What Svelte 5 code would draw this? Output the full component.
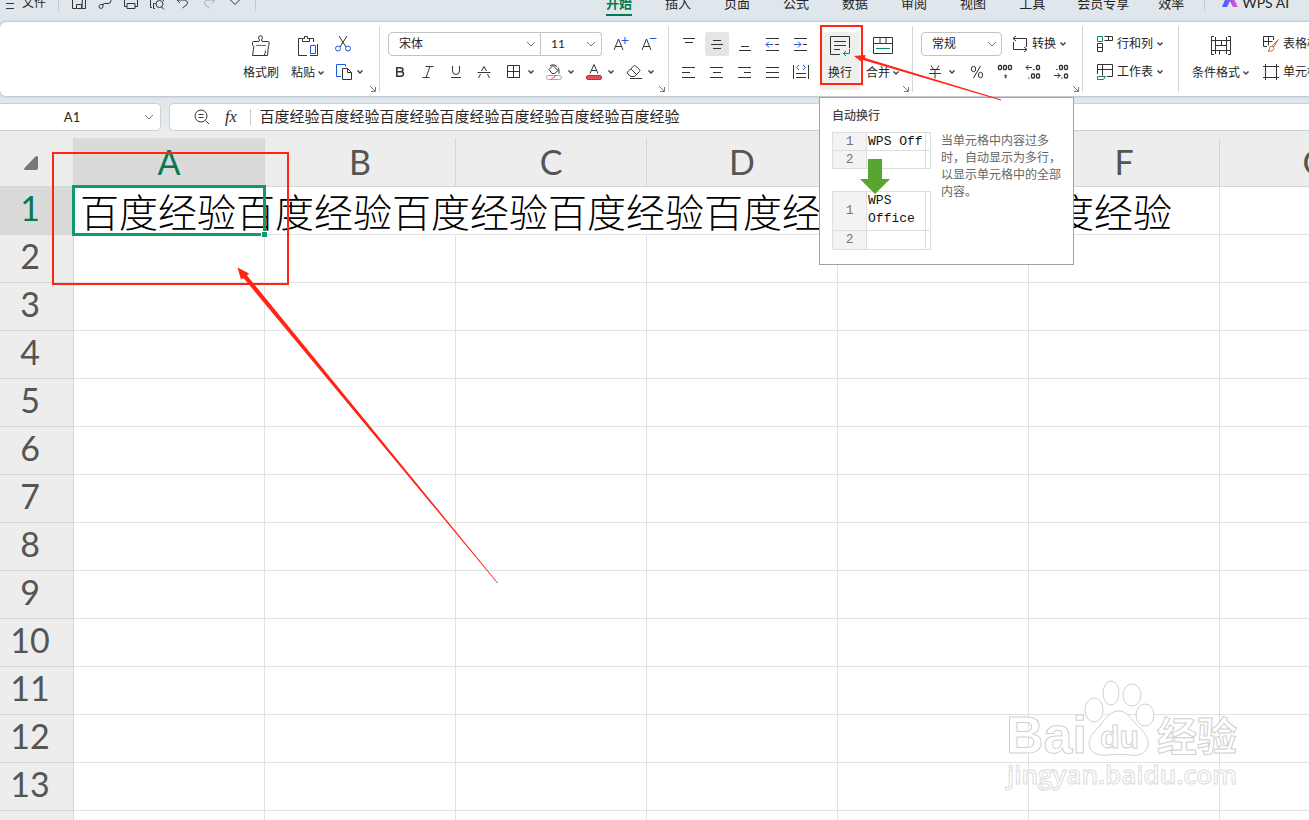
<script lang="ts">
    const mainTabs = ['开始', '插入', '页面', '公式', '数据', '审阅', '视图', '工具'];
    const extraTabs = ['会员专享', '效率'];
    const columns = ['A', 'B', 'C', 'D', 'E', 'F', 'G'];
    const rows = Array.from({ length: 14 }, (_, i) => i + 1);
    const content = '百度经验'.repeat(7);

    // quick access toolbar, 16x16 outlines
    const quick = [
        { name: '保存', d: 'M1.500 1v12.500H5M11 13.500h3.500V4L11.500 1zM5.500 13.500v-4h5v4z' },
        { name: '输出', d: 'M6 9.500H3.500a2 2 0 1 0 2.500 2V10q0-1.500 1.500-1.500H11a3 3 0 0 0 0-6H8M8 8.500h3' },
        { name: '打印', d: 'M4 11.500H1.500V4.500h13v7H12M4 8.500h8v5H4zM4 4V1h8v3' },
        { name: '打印预览', d: 'M3 12.500H1.500V4.500h13V6M6 13.500H4.500V8.500h2M15 14.500l-2.500-2.500M10.500 5.500a3.500 3.500 0 1 1 0 7 3.500 3.500 0 0 1 0-7' },
        { name: '撤销', d: 'M5 2L2 5l3 3M2 5h8a3 3 0 0 1 2 4.500L7.500 13' },
        { name: '恢复', d: 'M11 2l3 3-3 3M14 5H6a3 3 0 0 0-2 4.500L8.500 13' },
        { name: '更多', d: 'M3.500 5L8 9.500 12.500 5' }
    ];

    const alignTop = [
        { name: '顶端对齐', d: 'M2 2.500h12M4 6.500h8' },
        { name: '垂直居中', d: 'M4 4.500h8M2 8.500h12M4 12.500h8' },
        { name: '底端对齐', d: 'M4 10.500h8M2 14.500h12' }
    ];
    const alignBottom = [
        { name: '左对齐', d: 'M1 3.500h13M1 8.500h8M1 13.500h13' },
        { name: '水平居中', d: 'M1 3.500h13M4 8.500h8M1 13.500h13' },
        { name: '右对齐', d: 'M1 3.500h13M7 8.500h7M1 13.500h13' },
        { name: '两端对齐', d: 'M1 3.500h13M1 8.500h13M1 13.500h13' }
    ];

    let activeTab = $state('开始');
    let fontName = $state('宋体');
    let fontSize = $state('11');
    let format = $state('常规');
    let formula = $state(content);
</script>

{#snippet caret()}
    <svg class="caret" viewBox="0 0 6 6" aria-hidden="true"><path d="M.5 1.500L3 4l2.500-2.500" /></svg>
{/snippet}

{#snippet chevron()}
    <svg class="chevron" viewBox="0 0 10 6" aria-hidden="true"><path d="M1 1l4 4 4-4" /></svg>
{/snippet}

{#snippet launcher()}
    <button class="launcher" aria-label="更多设置">
        <svg viewBox="0 0 6 6"><path d="M0 0l5 5M5.500 1v4.500H1" /></svg>
    </button>
{/snippet}

<div class="app">
    <header>
        <div class="menu">
            <button class="file">
                <svg viewBox="0 0 10 16"><path d="M0 4.500h8M0 8.500h8M0 13.500h8" /></svg>
                文件
            </button>
            <span class="bar"></span>
            <div class="quick">
                {#each quick as item}
                    <button aria-label={item.name} class:faded={item.name === '恢复'}>
                        <svg class="i16" viewBox="0 0 16 16"><path d={item.d} /></svg>
                    </button>
                {/each}
            </div>
            <span class="bar"></span>
            <nav class="tabs">
                {#each mainTabs as tab}
                    <button class:active={tab === activeTab} onclick={() => (activeTab = tab)}>{tab}</button>
                {/each}
            </nav>
            <nav class="tabs extra">
                {#each extraTabs as tab}
                    <button class:active={tab === activeTab} onclick={() => (activeTab = tab)}>{tab}</button>
                {/each}
            </nav>
            <span class="bar last"></span>
            <button class="ai">
                <svg viewBox="0 0 16 16">
                    <defs>
                        <linearGradient id="ai" x1="0" x2="1">
                            <stop offset="0" stop-color="#2a6bff" />
                            <stop offset="0.5" stop-color="#8d4dff" />
                            <stop offset="1" stop-color="#ff5da8" />
                        </linearGradient>
                    </defs>
                    <path d="M0 12L5 0h5l6 12h-5L8 6l-3 6z" fill="url(#ai)" stroke="none" />
                </svg>
                WPS AI
            </button>
        </div>
    </header>

    <section class="ribbon">
        <div class="group clipboard">
            <button class="big">
                <svg class="i20" viewBox="0 0 20 20">
                    <path d="M1.500 9.500v-3q0-1 1-1h4.500q1.500 0 1.500-1.500c0-1-1-1-1-2.200a2 2 0 0 1 4 0c0 1.200-1 1.200-1 2.200q0 1.500 1.500 1.500H17q1 0 1 1v3M3 9.500L1.500 19.500h15l1-10M13 19.500q1.500-2 1.500-5" />
                    <path d="M5 9.500h10" stroke="#c8500a" />
                </svg>
                <span>格式刷</span>
            </button>
            <button class="big paste">
                <svg class="i20" viewBox="0 0 20 20">
                    <path d="M9 19.500H.5v-17H4M11 2.500h4.500V6M4.500 5.500v-3h2v-2h3v2h2v3zM19.500 8v11.500H12" />
                    <path d="M12.500 9.500h5v8h-5z" stroke="#1a5be0" />
                </svg>
                <span>粘贴{@render caret()}</span>
            </button>
            <div class="rows">
                <div class="line">
                    <button aria-label="剪切" class="tight">
                        <svg class="i16" viewBox="0 0 16 16">
                            <path d="M4 0l7 11M12 0L5 11" />
                            <g stroke="#1a5be0"><circle cx="3" cy="12.500" r="2.500" /><circle cx="13" cy="12.500" r="2.500" /></g>
                        </svg>
                    </button>
                </div>
                <div class="line">
                    <button aria-label="复制" class="tight copy">
                        <svg class="i18" viewBox="0 0 18 18">
                            <path d="M6 13.500H1.500v-12h9v2" stroke="#1a5be0" />
                            <path d="M7.500 5.500h5l4 4v7h-9zM12.500 5.500v4h4" />
                        </svg>
                        {@render caret()}
                    </button>
                </div>
            </div>
            {@render launcher()}
        </div>

        <div class="group font">
            <div class="rows">
                <div class="line">
                    <div class="pick name">
                        <select aria-label="字体" bind:value={fontName}><option>宋体</option></select>
                        {@render chevron()}
                    </div>
                    <div class="pick size">
                        <select aria-label="字号" bind:value={fontSize}><option>11</option></select>
                        {@render chevron()}
                    </div>
                    <button class="tool grow" aria-label="增大字号">
                        <svg class="i16" viewBox="0 0 16 16"><path d="M1 14L5.500 3 10 14M2.500 10.500h6" /><path d="M8.500 4.500h7M12 1v7" stroke="#1a5be0" /></svg>
                    </button>
                    <button class="tool" aria-label="减小字号">
                        <svg class="i16" viewBox="0 0 16 16"><path d="M1 14L5.500 3 10 14M2.500 10.500h6" /><path d="M8.500 2.500h7" stroke="#1a5be0" /></svg>
                    </button>
                </div>
                <div class="line">
                    <button class="tool" aria-label="加粗">
                        <svg class="i16" viewBox="0 0 16 16"><path d="M4.800 3v10M4.800 3.800h4a2 2 0 0 1 0 4h-4M8 7.800h1.200a2.200 2.200 0 0 1 0 4.400H4.800" stroke-width="1.600" /></svg>
                    </button>
                    <button class="tool" aria-label="倾斜">
                        <svg class="i16" viewBox="0 0 16 16"><path d="M5.500 2.500h8M2.500 13.500h7M10 2.500L6 13.500" /></svg>
                    </button>
                    <button class="tool" aria-label="下划线">
                        <svg class="i16" viewBox="0 0 16 16"><path d="M4.500 2v5a3.500 3.500 0 0 0 7 0V2M3 13.500h10" /></svg>
                    </button>
                    <button class="tool" aria-label="删除线">
                        <svg class="i16" viewBox="0 0 16 16"><path d="M5.500 7L8 2.500 10.500 7M1.500 8.500h13M4.500 10l-2 4M11.500 10l2 4" /></svg>
                    </button>
                    <button class="split" aria-label="边框">
                        <svg class="i16" viewBox="0 0 16 16"><path d="M1.500 1.500h12v12h-12zM7.500 1.500v12M1.500 7.500h12" /></svg>
                        {@render caret()}
                    </button>
                    <button class="split" aria-label="填充颜色">
                        <svg class="i16" viewBox="0 0 16 16">
                            <path d="M4 1.500q4-2 7 1M3 5.500L7 1.500l5 5-3.500 3H6zM12 3.500q1.500 2 1 6" />
                            <rect x="0.500" y="11.500" width="15" height="4" rx="2" fill="#fff" stroke="#a5a5a5" />
                            <path d="M5 15.500l5-4" stroke="#e14a4a" />
                        </svg>
                        {@render caret()}
                    </button>
                    <button class="split" aria-label="字体颜色">
                        <svg class="i16" viewBox="0 0 16 16">
                            <path d="M4 9.500L8 0.500l4 9M5.500 6.500h5" />
                            <rect x="0.500" y="11.500" width="15" height="4" rx="1.500" fill="#e84b5b" stroke="#b93241" />
                        </svg>
                        {@render caret()}
                    </button>
                    <button class="split" aria-label="清除">
                        <svg class="i16" viewBox="0 0 16 16"><path d="M1.500 8L7.500 2q1-1 2 0L13.500 5.500q1 1 0 2L8.500 12.500H5L1.500 9.500q-.5-.5 0-1.500zM5 5l5.500 5.500M4 14.500h12" /></svg>
                        {@render caret()}
                    </button>
                </div>
            </div>
            {@render launcher()}
        </div>

        <div class="group align">
            <div class="rows">
                <div class="line">
                    {#each alignTop as item}
                        <button class="tool" class:pressed={item.name === '垂直居中'} aria-label={item.name}>
                            <svg class="i16" viewBox="0 0 16 16"><path d={item.d} /></svg>
                        </button>
                    {/each}
                    <button class="tool" aria-label="减少缩进">
                        <svg class="i16" viewBox="0 0 16 16"><path d="M1 2.500h13M10 8.500h4M1 14.500h13" /><path d="M1 8.500h7M4 5.500l-3 3 3 3" stroke="#1a5be0" /></svg>
                    </button>
                    <button class="tool" aria-label="增加缩进">
                        <svg class="i16" viewBox="0 0 16 16"><path d="M1 2.500h13M10 8.500h4M1 14.500h13" /><path d="M1 8.500h7M5 5.500l3 3-3 3" stroke="#1a5be0" /></svg>
                    </button>
                </div>
                <div class="line">
                    {#each alignBottom as item}
                        <button class="tool" aria-label={item.name}>
                            <svg class="i16" viewBox="0 0 16 16"><path d={item.d} /></svg>
                        </button>
                    {/each}
                    <button class="tool" aria-label="分散对齐">
                        <svg class="i16" viewBox="0 0 16 16"><path d="M0.500 1v14M15.500 1v14M3 9.500h10M3 13.500h10" /><path d="M6 1L3.500 3.500 6 6M10 1l2.500 2.500L10 6" stroke="#1a5be0" /></svg>
                    </button>
                </div>
            </div>
            <div class="wrap">
                <button class="big hover" aria-describedby="wrap-tip">
                    <svg class="i20" viewBox="0 0 20 20">
                        <path d="M10 18.500H.5V.5h19V12M4 5.500h12M4 9.500h12M4 13.500h6" />
                        <path d="M19.500 13v4.500h-6M16 15l-2.500 2.500L16 20" stroke="#0f8a5c" />
                    </svg>
                    <span>换行</span>
                </button>
                <div class="tip" id="wrap-tip" role="tooltip">
                    <h2>自动换行</h2>
                    <div class="tip-body">
                        <div class="demo">
                            <table class="before">
                                <tbody>
                                    <tr><th>1</th><td>WPS Off</td><td></td></tr>
                                    <tr><th>2</th><td></td><td></td></tr>
                                </tbody>
                            </table>
                            <svg class="down" viewBox="0 0 30 35"><path d="M8 0h14v20h8L15 35 0 20h8z" /></svg>
                            <table class="after">
                                <tbody>
                                    <tr><th>1</th><td>WPS<br />Office</td><td></td></tr>
                                    <tr><th>2</th><td></td><td></td></tr>
                                </tbody>
                            </table>
                        </div>
                        <p>当单元格中内容过多时，自动显示为多行，以显示单元格中的全部内容。</p>
                    </div>
                </div>
            </div>
            <button class="big merge">
                <svg class="i20" viewBox="0 0 20 20">
                    <path d="M.5 1.500h19v16H.5zM.5 7.500h19M7 1.500v6M13 1.500v6" />
                    <path d="M3 12.500h14" stroke="#0f8a5c" />
                </svg>
                <span>合并{@render caret()}</span>
            </button>
            {@render launcher()}
        </div>

        <div class="group number">
            <div class="rows">
                <div class="line">
                    <div class="pick format">
                        <select aria-label="数字格式" bind:value={format}><option>常规</option></select>
                        {@render chevron()}
                    </div>
                    <button class="text convert">
                        <svg class="i16" viewBox="0 0 16 16"><path d="M4 0L1 2.500h13.500V11M1 2.500L4 5M1.500 6v7.500H15M12 11l3 2.500-3 2.500" /></svg>
                        转换{@render caret()}
                    </button>
                </div>
                <div class="line">
                    <button class="split yen" aria-label="货币">
                        <svg class="i16" viewBox="0 0 16 16"><path d="M4 1.500l2.500 4M12 1.500l-2.500 4M3 5.500h10M2 9.500h12M8 5.500v9" /></svg>
                        {@render caret()}
                    </button>
                    <button class="tool" aria-label="百分比">
                        <svg class="i16" viewBox="0 0 16 16"><path d="M11.500 2l-7 12" /><ellipse cx="4.500" cy="5" rx="2.200" ry="2.700" /><ellipse cx="11.500" cy="11" rx="2.200" ry="2.700" /></svg>
                    </button>
                    <button class="tool" aria-label="千位分隔">
                        <svg class="i16" viewBox="0 0 16 16"><g stroke-width="1.300"><rect x="1.500" y="1.500" width="3" height="4" rx="1" /><rect x="6.500" y="1.500" width="3" height="4" rx="1" /><rect x="11.500" y="1.500" width="3" height="4" rx="1" /><path d="M7.500 11.500h1.500v1.500l-1 1" /></g></svg>
                    </button>
                    <button class="tool" aria-label="增加小数位">
                        <svg class="i16" viewBox="0 0 16 16"><path d="M7 3.500H1M3.500 1L1 3.500 3.500 6M8 5.500h1.500" /><g stroke-width="1.300"><rect x="11.500" y="1.500" width="3" height="4" rx="1" /><rect x="6.500" y="10" width="3" height="4" rx="1" /><rect x="11.500" y="10" width="3" height="4" rx="1" /></g><path d="M3 14h1.500" /></svg>
                    </button>
                    <button class="tool" aria-label="减少小数位">
                        <svg class="i16" viewBox="0 0 16 16"><path d="M1 11.500h6M4.500 9L7 11.500 4.500 14M8 14h1.500M3 5.500h1.500" /><g stroke-width="1.300"><rect x="6.500" y="1.500" width="3" height="4" rx="1" /><rect x="11.500" y="1.500" width="3" height="4" rx="1" /><rect x="11.500" y="10" width="3" height="4" rx="1" /></g></svg>
                    </button>
                </div>
            </div>
            {@render launcher()}
        </div>

        <div class="group cells">
            <div class="rows">
                <div class="line">
                    <button class="text">
                        <svg class="i16" viewBox="0 0 16 16"><path d="M.5 .5h5v5h-5z" stroke="#0f8a5c" /><path d="M7.500 .5h8v4h-8M11.500 .5v4M.5 7.500h5v8h-5zM.5 11.500h5" /></svg>
                        行和列{@render caret()}
                    </button>
                </div>
                <div class="line">
                    <button class="text">
                        <svg class="i16" viewBox="0 0 16 16"><path d="M.5 10V.5h15v12H10M.5 5.500h15M5.500 .5v11" /><path d="M.5 12.500h8l-2 3h-6z" stroke="#0f8a5c" /></svg>
                        工作表{@render caret()}
                    </button>
                </div>
            </div>
        </div>

        <div class="group styles">
            <button class="big">
                <svg class="i20" viewBox="0 0 20 20"><path d="M3 .5H.5v18H3M17 .5h2.500v18H17M4.500 1v17M15.500 1v17M4.500 4.500h11M4.500 14.500h11M4.500 9.500h11M.5 4.500h4M.5 14.500h4M15.500 4.500h4M15.500 14.500h4M10.500 4.500v5M8.500 14.500v4" /></svg>
                <span>条件格式{@render caret()}</span>
            </button>
            <div class="rows">
                <div class="line">
                    <button class="text">
                        <svg class="i16" viewBox="0 0 16 16"><path d="M4 10.500H.5V.5h10V4M.5 5.500h9M5.500 .5v9" /><path d="M15.500 3.500L9.500 9.500l1 1.500 5-7.500M9.500 10q-3 0-3 2.500 0 2-1.500 2.500 5 1 6-2.500z" stroke="#c8633a" /></svg>
                        表格样式
                    </button>
                </div>
                <div class="line">
                    <button class="text">
                        <svg class="i16" viewBox="0 0 16 16"><path d="M2.500 0v16M13.500 0v16M0 2.500h16M0 13.500h16" /></svg>
                        单元格样式
                    </button>
                </div>
            </div>
        </div>
    </section>

    <div class="formula">
        <div class="namebox">
            <input aria-label="名称框" value="A1" />
            {@render chevron()}
        </div>
        <div class="fx">
            <button aria-label="缩小">
                <svg class="i16" viewBox="0 0 16 16"><circle cx="7" cy="7" r="6" /><path d="M4.500 5.500h5M4.500 8.500h5M11.500 11.500l3.500 3.500" /></svg>
            </button>
            <button class="fn" aria-label="插入函数">fx</button>
            <span class="bar"></span>
            <input class="entry" aria-label="编辑栏" bind:value={formula} />
        </div>
    </div>

    <main>
        <table class="sheet">
            <thead>
                <tr>
                    <th class="corner"><svg viewBox="0 0 14 14"><path d="M12.500 0q1.500 0 1.500 1v11q0 2-2 2H2q-3 0-1.500-2L11 1z" /></svg></th>
                    {#each columns as column}
                        <th scope="col" class:selected={column === 'A'}>{column}</th>
                    {/each}
                </tr>
            </thead>
            <tbody>
                {#each rows as row}
                    <tr>
                        <th scope="row" class:selected={row === 1}>{row}</th>
                        {#each columns as column}
                            {#if row === 1 && column === 'A'}
                                <td class="current"><span>{content}</span></td>
                            {:else}
                                <td class:covered={row === 1 && column < 'F'}></td>
                            {/if}
                        {/each}
                    </tr>
                {/each}
            </tbody>
        </table>
    </main>

    <svg class="watermark" viewBox="0 0 240 120" aria-hidden="true">
        <text x="2" y="79" font-size="52">Bai</text>
        <path d="M115 37c8 0 11 7 17 13 7 7 13 13 12 21-2 10-11 11-18 10-8-1-14-1-22 0-8 1-18-1-19-11 0-9 7-13 12-20 6-7 10-13 18-13z" />
        <ellipse cx="90" cy="36" rx="9" ry="12" />
        <ellipse cx="107" cy="19" rx="8" ry="12" />
        <ellipse cx="128" cy="21" rx="9" ry="11" />
        <ellipse cx="141" cy="41" rx="9" ry="11" />
        <text class="du" x="96" y="74" font-size="32">du</text>
        <text class="cjk" x="153" y="77" font-size="40">经验</text>
        <text class="url" x="3" y="110" font-size="26">jingyan.baidu.com</text>
    </svg>

    <svg class="marks" viewBox="0 0 1309 820" aria-hidden="true">
        <rect x="53" y="153" width="235" height="131" />
        <rect x="821" y="26" width="41" height="58" />
        <path d="M237.500 267.500l3.500 12 2.500-1.500L497.500 583.500l.5-.5L247 275.500l2-2z" />
        <path d="M854 56l9 7v-3L1001 100.500l.3-1L865 58l.5-3z" />
    </svg>
</div>

<style>
    :global(body) {
        background: #ededed;
        overflow: hidden;
    }

    .app {
        position: relative;
        height: 100vh;
        overflow: hidden;
        display: flex;
        flex-direction: column;
        background: #e0e7ec;
        color: #262626;
        font: 12px/16px Lato, "Noto Sans CJK SC", sans-serif;
    }

    button,
    input,
    select {
        margin: 0;
        padding: 0;
        border: 0;
        background: none;
        color: inherit;
        font: inherit;
        outline: none;
    }

    button {
        display: flex;
        align-items: center;
        flex: none;
        white-space: nowrap;
    }

    svg {
        display: block;
        flex: none;
        fill: none;
        stroke: #333;
        overflow: visible;
    }

    .i16 {
        width: 16px;
        height: 16px;
    }

    .i18 {
        width: 18px;
        height: 18px;
    }

    .i20 {
        width: 20px;
        height: 20px;
    }

    .caret {
        width: 6px;
        height: 6px;
        stroke: #444;
        stroke-width: 1.500;
    }

    .chevron {
        width: 10px;
        height: 6px;
        stroke: #777;
        pointer-events: none;
    }

    /* menu row */
    header {
        height: 22px;
        flex: none;
        overflow: hidden;
    }

    .menu {
        display: flex;
        align-items: center;
        height: 26px;
        margin-top: -10px;
        padding-left: 6px;
        font-size: 13px;
    }

    .file {
        gap: 6px;
        font-size: 12px;
    }

    .file svg {
        width: 10px;
        height: 16px;
    }

    .bar {
        width: 1px;
        height: 16px;
        flex: none;
        background: #c3c9ce;
    }

    .file + .bar {
        margin-left: 12px;
    }

    .quick {
        display: flex;
        gap: 10px;
        margin: 0 12px;
    }

    .faded {
        opacity: 0.35;
    }

    .tabs {
        display: flex;
        gap: 33px;
        height: 100%;
        margin-left: 350px;
    }

    .tabs.extra {
        gap: 29px;
        margin-left: 32px;
    }

    .tabs button {
        box-sizing: border-box;
        border-top: 2px solid transparent;
        border-bottom: 2px solid transparent;
    }

    .tabs .active {
        border-bottom-color: #08784f;
        color: #08784f;
        font-weight: 700;
    }

    .bar.last {
        margin: 0 17px 0 20px;
    }

    .ai {
        gap: 4px;
        font-size: 14px;
    }

    .ai svg {
        width: 16px;
        height: 16px;
    }

    /* ribbon */
    .ribbon {
        position: relative;
        z-index: 2;
        display: flex;
        flex: none;
        height: 74px;
        background: #fff;
        border-radius: 6px 0 0 6px;
        box-shadow: 0 0 3px rgba(90, 110, 125, 0.6);
    }

    .group {
        position: relative;
        display: flex;
        flex: none;
        padding-top: 10px;
    }

    .group:not(.styles)::after {
        content: "";
        width: 1px;
        height: 66px;
        margin-top: -6px;
        background: #d5d5d5;
    }

    .launcher {
        position: absolute;
        right: 4px;
        bottom: 4px;
    }

    .launcher svg {
        width: 6px;
        height: 6px;
        stroke: #777;
    }

    .rows {
        display: flex;
        flex-direction: column;
        gap: 4px;
    }

    .line {
        display: flex;
        align-items: center;
        height: 24px;
    }

    .big {
        flex-direction: column;
        align-items: center;
        gap: 9px;
        height: 58px;
        padding-top: 4px;
        margin-top: -4px;
        box-sizing: border-box;
        position: relative;
    }

    .big span {
        display: flex;
        align-items: center;
        gap: 3px;
    }

    .group > .big,
    .wrap .big {
        margin-top: 0;
    }

    .tool,
    .split {
        height: 24px;
        justify-content: center;
    }

    .tool {
        width: 24px;
        margin-right: 4px;
        border-radius: 3px;
    }

    .tool:last-child {
        margin-right: 0;
    }

    .split {
        justify-content: flex-start;
        gap: 6px;
        width: 40px;
        padding-left: 6px;
        box-sizing: border-box;
    }

    .pressed {
        background: #e5e5e5;
    }

    .text {
        gap: 4px;
    }

    .clipboard {
        padding-left: 243px;
    }

    .clipboard .rows {
        width: 31px;
        margin: 0 13px 0 11px;
    }

    .paste {
        margin-left: 12px;
    }

    .copy {
        gap: 4px;
    }

    .font .rows {
        margin: 0 7px 0 8px;
    }

    .pick {
        display: flex;
        align-items: center;
        box-sizing: border-box;
        height: 24px;
        border: 1px solid #c3c3c3;
        border-radius: 4px;
    }

    .pick select {
        appearance: none;
        flex: 1;
        min-width: 0;
        height: 22px;
        padding: 0 10px;
    }

    .pick .chevron {
        margin-right: 4px;
    }

    .name {
        width: 153px;
        border-radius: 4px 0 0 4px;
    }

    .size {
        width: 61px;
        border-left: 0;
        border-radius: 0 4px 4px 0;
    }

    .size .chevron {
        margin-right: 5px;
    }

    .grow {
        margin-left: 7px;
    }

    .align .rows {
        margin: 0 7px 0 8px;
    }

    .wrap {
        position: relative;
        width: 40px;
    }

    .hover {
        width: 40px;
        background: #efefef;
    }

    .merge {
        margin: 0 13px 0 6px;
    }

    .number .rows {
        margin: 0 9px 0 8px;
    }

    .format {
        width: 81px;
    }

    .convert {
        margin-left: 10px;
    }

    .yen {
        width: 44px;
    }

    .cells .rows {
        margin: 0 15px 0 14px;
    }

    .styles {
        padding-left: 13px;
    }

    .styles .rows {
        margin-left: 14px;
    }

    /* tooltip */
    .tip {
        position: absolute;
        top: 65px;
        left: -1px;
        box-sizing: border-box;
        width: 255px;
        height: 168px;
        padding: 10px 10px 0 12px;
        border: 1px solid #a3a3a3;
        background: #fff;
        color: #666;
    }

    .tip h2 {
        margin: 0 0 8px;
        color: #444;
        font-size: 12px;
        font-weight: 500;
        line-height: 16px;
    }

    .tip-body {
        display: flex;
        gap: 10px;
    }

    .tip p {
        width: 121px;
        margin: 0;
        line-height: 17px;
    }

    .demo {
        position: relative;
        width: 99px;
        flex: none;
    }

    .demo table {
        width: 99px;
        border-collapse: collapse;
        table-layout: fixed;
        color: #111;
        font: 13px/17px "Liberation Mono", monospace;
    }

    .demo th {
        width: 33px;
        background: #f3f3f3;
        color: #777;
        font-weight: 400;
    }

    .demo th,
    .demo td {
        height: 17px;
        padding: 0;
        border: 1px solid #dedede;
        white-space: nowrap;
    }

    .demo td:nth-child(2) {
        width: 57px;
        padding-left: 1px;
    }

    .demo .after {
        margin-top: 22px;
        line-height: 18px;
    }

    .after th,
    .after td {
        height: 18px;
    }

    .after tr:first-child td {
        padding-bottom: 2px;
    }

    .down {
        position: absolute;
        top: 27px;
        left: 28px;
        width: 30px;
        height: 35px;
        fill: #58a531;
        stroke: none;
    }

    /* formula bar */
    .formula {
        display: flex;
        flex: none;
        gap: 8px;
        padding: 7px 0;
        background: linear-gradient(#dfe6eb, #ededed);
    }

    .namebox,
    .fx {
        display: flex;
        align-items: center;
        box-sizing: border-box;
        height: 28px;
        border: 1px solid #cbd0d4;
        background: #fff;
    }

    .namebox {
        width: 161px;
        padding-right: 6px;
        border-left: 0;
        border-radius: 0 5px 5px 0;
    }

    .namebox input {
        flex: 1;
        min-width: 0;
        text-align: center;
        font-size: 13px;
    }

    .fx {
        flex: 1;
        padding-left: 24px;
        border-right: 0;
        border-radius: 5px 0 0 5px;
    }

    .fn {
        margin: 0 13px 0 15px;
        font: italic 16px/20px "Liberation Serif", serif;
    }

    .entry {
        flex: 1;
        min-width: 0;
        height: 24px;
        padding: 0 0 4px 9px;
        box-sizing: border-box;
        font-size: 15px;
        line-height: 20px;
    }

    /* sheet */
    main {
        flex: 1;
        min-height: 0;
        overflow: hidden;
        background: #fff;
    }

    .sheet {
        width: 1411px;
        table-layout: fixed;
        border-collapse: separate;
        border-spacing: 0;
    }

    .sheet th,
    .sheet td {
        box-sizing: border-box;
        width: 191px;
        height: 48px;
        padding: 0;
        border-right: 1px solid #e1e1e1;
        border-bottom: 1px solid #e1e1e1;
    }

    .sheet th {
        background: #ededed;
        border-color: #d6d6d6;
        color: #555;
        font: 400 34px/40px Lato, sans-serif;
    }

    .sheet thead th {
        height: 49px;
    }

    .sheet th:first-child {
        width: 74px;
        padding-right: 13px;
        padding-bottom: 6px;
    }

    .sheet th.selected {
        background: #dadada;
        color: #08784f;
    }

    .corner svg {
        width: 14px;
        height: 14px;
        margin: 8px 0 0 24px;
        fill: #777;
        stroke: none;
    }

    .sheet td.covered {
        border-right-color: transparent;
    }

    .sheet .current {
        position: relative;
        padding-left: 6px;
        padding-bottom: 2px;
        color: #000;
        font: 300 39px/44px "Noto Sans CJK SC", sans-serif;
    }

    .current span {
        display: block;
        width: 0;
        white-space: nowrap;
    }

    .current::before {
        content: "";
        position: absolute;
        inset: -2px;
        border: 3px solid #119b68;
    }

    .current::after {
        content: "";
        position: absolute;
        right: -3px;
        bottom: -3px;
        width: 5px;
        height: 5px;
        border: solid #fff;
        border-width: 1px 0 0 1px;
        background: #119b68;
    }

    .watermark {
        position: absolute;
        right: 65px;
        bottom: 26px;
        width: 240px;
        height: 120px;
        fill: #fff;
        stroke: #d0d0d0;
        stroke-width: 1;
        font-family: "Liberation Sans", sans-serif;
        font-weight: 700;
    }

    .watermark .cjk {
        font-family: "Noto Sans CJK SC", sans-serif;
    }

    .watermark .url {
        font-family: "Open Sans", sans-serif;
        font-weight: 600;
        stroke: #dcdcdc;
    }

    .marks {
        position: absolute;
        z-index: 3;
        top: 0;
        left: 0;
        width: 1309px;
        height: 820px;
        pointer-events: none;
        stroke: none;
    }

    .marks rect {
        stroke: #ff2414;
        stroke-width: 2;
    }

    .marks path {
        fill: #ff2414;
    }
</style>
